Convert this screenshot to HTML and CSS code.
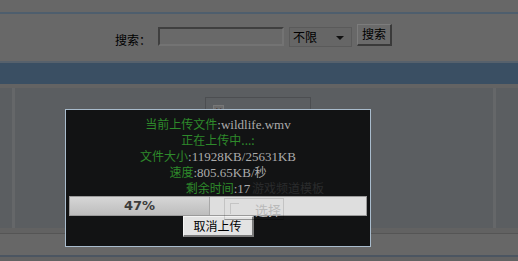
FILE: index.html
```html
<!DOCTYPE html>
<html lang="zh">
<head>
    <meta charset="UTF-8">
    <title>上传</title>
    <link rel="stylesheet" href="styles.css">
</head>
<body>
    <!-- Верх страницы -->
    <div class="top"></div>

    <!-- Поиск -->
    <div class="search-bar">
        <span class="search-label">搜索：</span>
        <span class="search-input"></span>
        <span class="search-select">不限<span class="arrow"></span></span>
        <span class="search-btn">搜索</span>
    </div>

    <!-- Навигация -->
    <div class="nav"></div>

    <!-- Контент -->
    <div class="content">
        <div class="side"></div>
        <div class="main">
            <div class="thumb"><span class="broken">✕</span></div>
        </div>
        <div class="side side-right"></div>
    </div>

    <div class="footer">
        <div class="footer-bar"></div>
    </div>

    <!-- Окно загрузки -->
    <div class="upload-box">
        <div class="line"><span class="label">当前上传文件</span><span class="value">:wildlife.wmv</span></div>
        <div class="line"><span class="label">正在上传中...:</span></div>
        <div class="line"><span class="label">文件大小</span><span class="value">:11928KB/25631KB</span></div>
        <div class="line"><span class="label">速度</span><span class="value">:805.65KB/</span><span class="value cjk">秒</span></div>
        <div class="line"><span class="label">剩余时间</span><span class="value">:17</span></div>
        <div class="progress">
            <div class="progress-fill" style="width: 47%">47%</div>
        </div>
        <div class="cancel-row">
            <span class="cancel-btn">取消上传</span>
        </div>

        <!-- просвечивает снизу -->
        <span class="ghost-title">游戏频道模板</span>
        <span class="ghost-btn"><span class="ghost-corner"></span>选择</span>
    </div>
</body>
</html>
```

FILE: styles.css
```css
body {
    margin: 0;
    width: 518px;
    height: 261px;
    overflow: hidden;
    background: #676767;
    font-family: 'Noto Sans CJK SC', sans-serif;
    font-size: 12px;
    position: relative;
}

/* Верх */
.top {
    height: 12px;
    border-bottom: 2px solid #4e5e6d;
}

/* Поиск */
.search-bar {
    height: 47px;
    display: flex;
    align-items: center;
    padding-left: 115px;
    background: #686868;
    color: #000;
}

.search-label {
    width: 43px;
    margin-top: 3px;
}

.search-input {
    width: 122px;
    height: 15px;
    background: #696969;
    border: 2px solid #3f3f3f;
    border-right-color: #737373;
    border-bottom-color: #737373;
    margin-top: -3px;
}

.search-select {
    width: 58px;
    height: 18px;
    line-height: 18px;
    margin-left: 5px;
    margin-top: -2px;
    padding-left: 3px;
    background: #666;
    border: 1px solid #5a5a5a;
    position: relative;
}

.arrow {
    position: absolute;
    right: 7px;
    top: 8px;
    border-left: 4px solid transparent;
    border-right: 4px solid transparent;
    border-top: 4px solid #111;
}

.search-btn {
    width: 32px;
    height: 19px;
    line-height: 17px;
    margin-left: 5px;
    margin-top: -5px;
    text-align: center;
    background: #6b6b6b;
    border: 1px solid #7c7c7c;
    border-right: 2px solid #3a3a3a;
    border-bottom: 2px solid #3a3a3a;
}

/* Навигация */
.nav {
    height: 21px;
    border-top: 2px solid #56616c;
    border-bottom: 4px solid #636363;
    background: #3a4f63;
}

/* Контент */
.content {
    height: 140px;
    display: flex;
    background: #5b5e61;
}

.side {
    width: 12px;
    border-right: 3px solid #656769;
}

.side-right {
    width: 22px;
    border-right: none;
    border-left: 3px solid #656769;
}

.main {
    flex: 1;
    padding: 9px 0 0 190px;
}

.thumb {
    width: 97px;
    height: 12px;
    border: 1px solid #4c4e51;
    border-bottom: none;
    padding-left: 7px;
    padding-top: 2px;
}

.broken {
    display: inline-block;
    width: 9px;
    height: 9px;
    line-height: 9px;
    font-size: 9px;
    text-align: center;
    color: #3a2a2a;
    border: 1px solid #777;
    background: #6a6a6a;
}

/* Подвал */
.footer {
    height: 33px;
    background: #626262;
    padding-top: 5px;
}

.footer-bar {
    height: 21px;
    border-top: 1px solid #555;
    border-bottom: 2px solid #4b5561;
    background: #676767;
}

/* Окно загрузки */
.upload-box {
    position: absolute;
    left: 65px;
    top: 109px;
    width: 306px;
    height: 138px;
    box-sizing: border-box;
    border: 1px solid #a9bccd;
    background: #121314;
    padding-top: 6px;
    text-align: center;
}

.line {
    height: 16px;
    line-height: 16px;
    white-space: nowrap;
}

.label {
    color: #2e8a2b;
}

.value {
    color: #ababab;
    font-family: 'Liberation Serif', serif;
    font-size: 13px;
}

.value.cjk {
    font-family: 'Noto Sans CJK SC', sans-serif;
    font-size: 12px;
}

.progress {
    margin: 0 3px;
    height: 18px;
    border: 1px solid #9a9a9a;
    background: #dedede;
    text-align: left;
}

.progress-fill {
    height: 18px;
    line-height: 18px;
    text-align: center;
    font-family: 'DejaVu Sans', sans-serif;
    font-size: 13px;
    font-weight: bold;
    color: #3c3c3c;
    background: linear-gradient(to bottom, #d6d6d6, #bdbdbd);
    border-right: 1px solid #a8a8a8;
}

.cancel-row {
    height: 21px;
}

.cancel-btn {
    display: inline-block;
    width: 68px;
    height: 18px;
    line-height: 18px;
    color: #000;
    background: #e3e3e3;
    border: 1px solid #f4f4f4;
    border-right: 2px solid #7a7a7a;
    border-bottom: 2px solid #7a7a7a;
}

.ghost-title {
    position: absolute;
    left: 186px;
    top: 70px;
    line-height: 16px;
    font-size: 12px;
    color: #2a2b2c;
}

.ghost-btn {
    position: absolute;
    left: 158px;
    top: 88px;
    width: 60px;
    height: 22px;
    line-height: 22px;
    padding-left: 30px;
    box-sizing: border-box;
    text-align: left;
    color: #b9b9b9;
    font-size: 13px;
    border: 1px solid rgba(0, 0, 0, 0.12);
    border-bottom-color: rgba(0, 0, 0, 0.35);
}

.ghost-corner {
    position: absolute;
    left: 5px;
    top: 4px;
    width: 8px;
    height: 10px;
    border-top: 1px solid #c4c4c4;
    border-left: 1px solid #c4c4c4;
}
```
